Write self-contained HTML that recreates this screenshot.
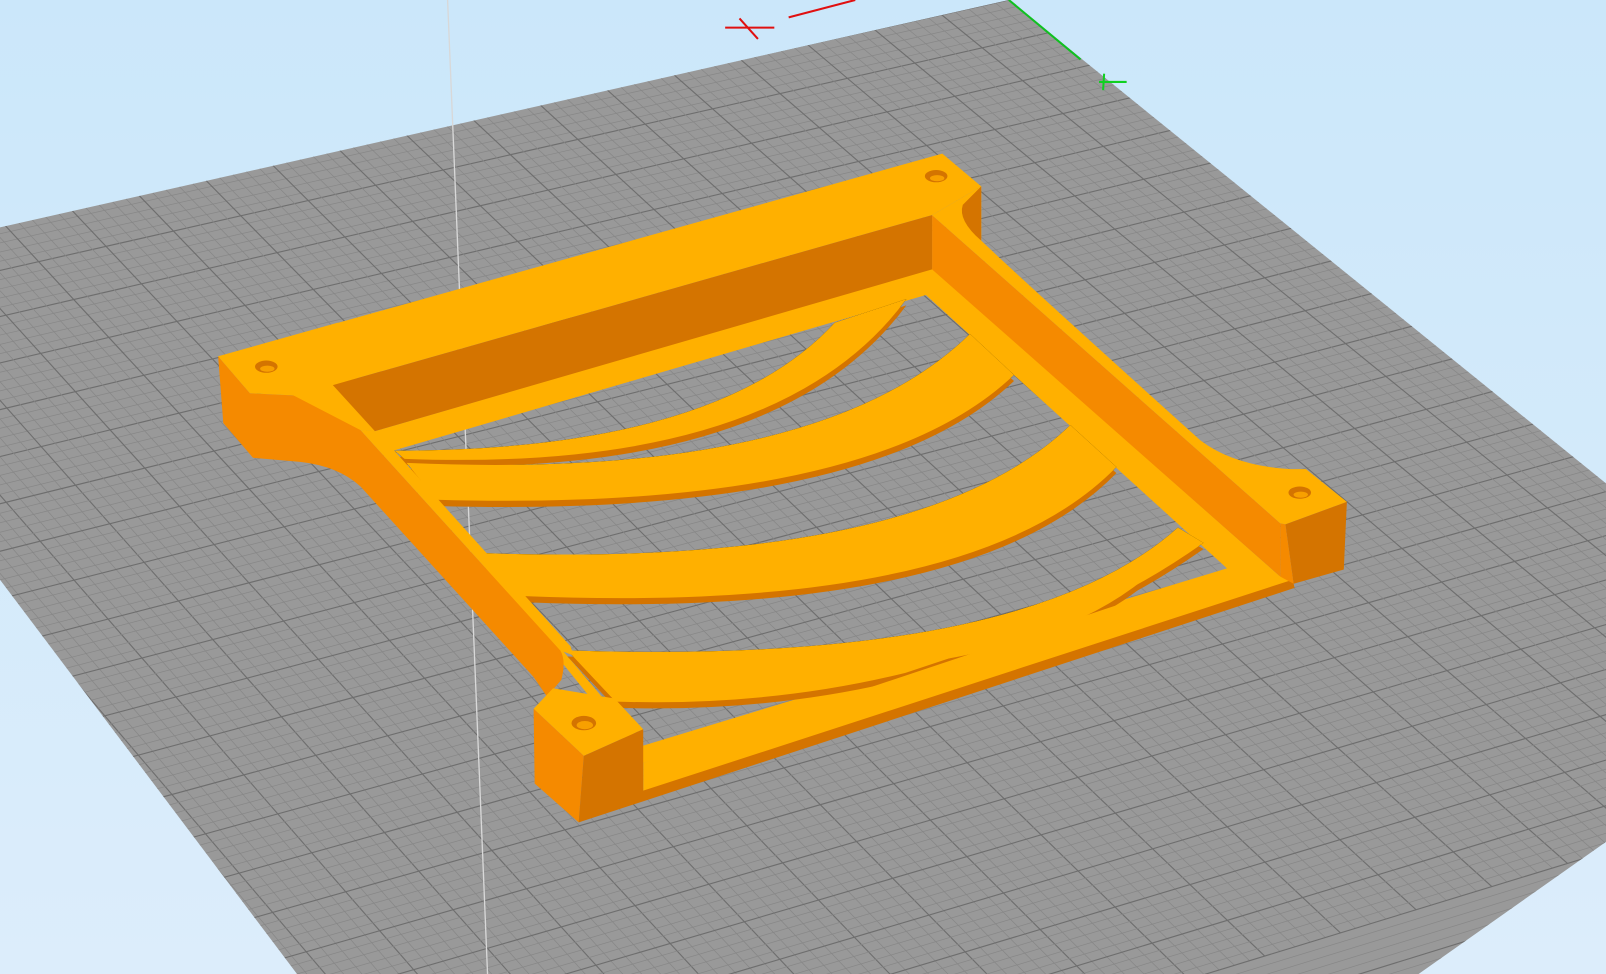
<!DOCTYPE html>
<html><head><meta charset="utf-8"><style>
html,body{margin:0;padding:0;width:1606px;height:974px;overflow:hidden;background:#d3eafb}
svg{display:block}
</style></head><body>
<svg width="1606" height="974" viewBox="0 0 1568 951" preserveAspectRatio="none" xmlns="http://www.w3.org/2000/svg">
<defs>
<linearGradient id="bg" x1="0" y1="0" x2="0" y2="1"><stop offset="0" stop-color="#cbe7fa"/><stop offset="1" stop-color="#dcedfb"/></linearGradient>
<clipPath id="pc"><polygon points="0,222 985,0 1568,472 1568,822 1385,951 290,951 0,566"/></clipPath>
</defs>
<rect width="1568" height="951" fill="url(#bg)"/>
<polygon points="0,222 985,0 1568,472 1568,822 1385,951 290,951 0,566" fill="#999999"/>
<g id="grid" clip-path="url(#pc)"></g>
<!-- axes -->
<line x1="770" y1="17" x2="835" y2="0" stroke="#e01010" stroke-width="2"/>
<line x1="708" y1="27" x2="756" y2="27" stroke="#e01010" stroke-width="2"/>
<line x1="722" y1="18" x2="740" y2="38" stroke="#e01010" stroke-width="2"/>
<line x1="985" y1="0" x2="1055" y2="58" stroke="#10c020" stroke-width="2"/>
<line x1="1073" y1="80" x2="1100" y2="80" stroke="#10d020" stroke-width="2"/>
<line x1="1078" y1="72" x2="1077" y2="88" stroke="#10d020" stroke-width="2"/>
<line x1="437" y1="0" x2="476" y2="951" stroke="#d8d8d8" stroke-width="1.3"/>

<!-- floor frame (inner) -->
<path fill-rule="evenodd" fill="#ffb000" d="M366,421 L910,262 L1250,563 L628,745 Z M384,440 L904,288 L1198,555 L628,728 Z"/>

<!-- vanes -->
<g id="v">
<path d="M385,440 Q700,440 815,315 L885,292 Q760,462 395,448 Z"/>
<path d="M397,452 Q800,470 947,326 L990,366 Q850,500 426,488 Z"/>
<path d="M470,540 Q900,555 1045,415 L1090,456 Q950,600 512,582 Z"/>
<path d="M554,635 Q1000,650 1150,515 L1175,530 Q1090,590 1004,617 L884,657 Q750,690 601,685 Z"/>
<path d="M400,454 Q810,475 945,332 Q830,490 400,454 Z"/>
<path d="M480,549 Q910,565 1050,432 Q930,590 480,549 Z"/>
<path d="M568,651 Q1010,668 1160,520 Q1040,690 568,651 Z"/>
</g>
<use href="#v" fill="#d47400" transform="translate(0,6)"/>
<use href="#v" fill="#ffb000"/>

<!-- bottom rail -->
<polygon points="628,745 1198,555 1255,563 1262,568 628,778" fill="#ffb000"/>
<polygon points="628,772 1262,566 1264,574 565,803 570,790" fill="#d47400"/>

<!-- left ear + left rail side face -->
<path d="M213,348 L218,413 L247,447 L293,451 Q330,455 352,475 L521,661 L534,680 L548,664 Q553,645 547,635 L352,420 Q325,390 286,386 L244,384 Z" fill="#f58a00"/>
<polygon points="352,420 366,421 384,439 557,631 560,640 547,635" fill="#ffb000"/>
<path d="M213,348 L330,315 L366,421 L352,420 Q325,390 286,386 L244,384 Z" fill="#ffb000"/>

<!-- top rail -->
<polygon points="213,348 920,150 958,182 910,210 325,376 366,421 352,420" fill="#ffb000"/>
<polygon points="325,376 910,210 910,263 366,421" fill="#d47400"/>

<!-- right rail -->
<polygon points="910,210 1250,511 1250,563 910,263" fill="#f58a00"/>
<path d="M910,210 L958,182 L958,235 Q1000,275 1172,430 Q1205,455 1260,458 L1275,458 L1315,490 L1255,512 L1250,511 Z" fill="#ffb000"/>
<path d="M958,182 L958,235 Q935,215 940,200 Z" fill="#d47400"/>
<path d="M1255,512 L1263,570 L1312,556 L1315,490 Z" fill="#d47400"/>
<path d="M1250,511 L1255,512 L1263,570 L1250,563 Z" fill="#f58a00"/>

<!-- bottom-left ear -->
<path d="M521,692 L540,672 L600,682 L628,712 L570,738 Z" fill="#ffb000"/>
<path d="M521,692 L522,765 L565,803 L570,738 Z" fill="#f58a00"/>
<path d="M570,738 L565,803 L628,778 L628,712 Z" fill="#d47400"/>

<!-- holes -->
<g fill="#d47400"><ellipse cx="260" cy="358" rx="11" ry="6"/><ellipse cx="914" cy="172" rx="11" ry="6"/><ellipse cx="1269" cy="481" rx="11" ry="6"/><ellipse cx="570" cy="706" rx="12" ry="7"/></g>
<g fill="#f8a000"><ellipse cx="261" cy="360" rx="7" ry="3"/><ellipse cx="915" cy="174" rx="7" ry="3"/><ellipse cx="1270" cy="483" rx="7" ry="3"/><ellipse cx="571" cy="708" rx="8" ry="4"/></g>
</svg>
<script>
(function(){
var g=document.getElementById('grid');
var TL=[-520,335],TR=[985,0],BR=[1900,730],BL=[200,1250];
function lerp(a,b,t){return [a[0]+(b[0]-a[0])*t,a[1]+(b[1]-a[1])*t];}
var N=115,h='';
for(var i=-30;i<=N+30;i++){var t=i/N,maj=(((i%5)+5)%5==0);
var c=maj?'#6e6e6e':'#878787',w=maj?1.1:0.7;
var a=lerp(TL,TR,t),b=lerp(BL,BR,t);
h+='<line x1="'+a[0]+'" y1="'+a[1]+'" x2="'+b[0]+'" y2="'+b[1]+'" stroke="'+c+'" stroke-width="'+w+'"/>';
a=lerp(TL,BL,t);b=lerp(TR,BR,t);
h+='<line x1="'+a[0]+'" y1="'+a[1]+'" x2="'+b[0]+'" y2="'+b[1]+'" stroke="'+c+'" stroke-width="'+w+'"/>';}
g.innerHTML=h;
})();
</script>
</body></html>
